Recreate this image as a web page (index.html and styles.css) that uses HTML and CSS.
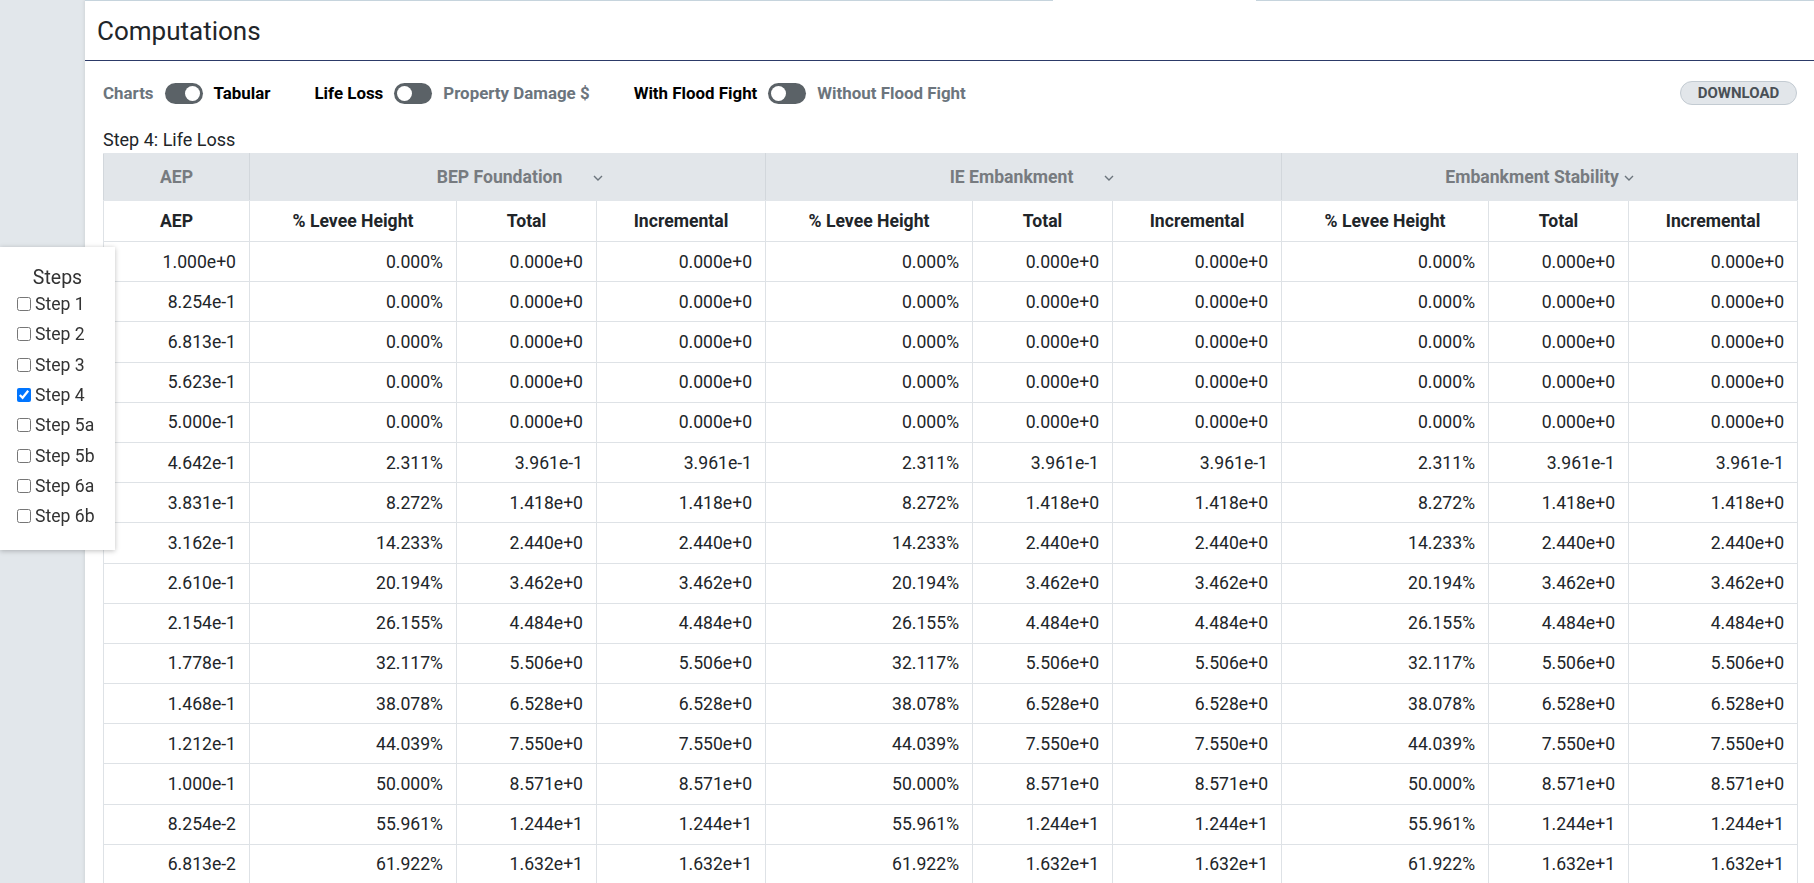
FILE: index.html
```html
<!DOCTYPE html>
<html lang="en">
<head>
<meta charset="utf-8">
<title>Computations</title>
<link rel="stylesheet" href="styles.css">
</head>
<body>
<div class="app">
  <aside class="sidebar"></aside>
  <main class="main">
    <div class="tabline"><span class="tabline-seg tabline-seg--left"></span><span class="tabline-gap"></span><span class="tabline-seg tabline-seg--right"></span></div>
    <header class="header"><h1 class="title">Computations</h1></header>
    <div class="toolbar">
      <div class="toggle-group">
        <span class="tlabel tlabel--off">Charts</span>
        <span class="switch switch--on"><span class="knob"></span></span>
        <span class="tlabel tlabel--on">Tabular</span>
      </div>
      <div class="toggle-group">
        <span class="tlabel tlabel--on">Life Loss</span>
        <span class="switch"><span class="knob"></span></span>
        <span class="tlabel tlabel--off">Property Damage $</span>
      </div>
      <div class="toggle-group">
        <span class="tlabel tlabel--on">With Flood Fight</span>
        <span class="switch"><span class="knob"></span></span>
        <span class="tlabel tlabel--off">Without Flood Fight</span>
      </div>
      <button class="download">DOWNLOAD</button>
    </div>
    <div class="step-label">Step 4: Life Loss</div>
    <table class="grid">
      <colgroup>
        <col class="c-aep">
        <col class="c-lev"><col class="c-tot"><col class="c-inc">
        <col class="c-lev"><col class="c-tot"><col class="c-inc">
        <col class="c-lev"><col class="c-tot"><col class="c-inc">
      </colgroup>
      <thead>
        <tr class="row-groups">
          <th>AEP</th>
          <th colspan="3" class="group group--bep"><span class="group-in"><span>BEP Foundation</span><svg class="chev chev--wide" width="10" height="6" viewBox="0 0 10 6"><polyline points="1,1 5,5 9,1" fill="none" stroke="#6c757d" stroke-width="1.4"/></svg></span></th>
          <th colspan="3" class="group group--ie"><span class="group-in"><span>IE Embankment</span><svg class="chev chev--wide" width="10" height="6" viewBox="0 0 10 6"><polyline points="1,1 5,5 9,1" fill="none" stroke="#6c757d" stroke-width="1.4"/></svg></span></th>
          <th colspan="3" class="group"><span class="group-in"><span>Embankment Stability</span><svg class="chev" width="10" height="6" viewBox="0 0 10 6"><polyline points="1,1 5,5 9,1" fill="none" stroke="#6c757d" stroke-width="1.4"/></svg></span></th>
        </tr>
        <tr class="row-cols">
          <th>AEP</th>
          <th>% Levee Height</th><th>Total</th><th>Incremental</th>
          <th>% Levee Height</th><th>Total</th><th>Incremental</th>
          <th>% Levee Height</th><th>Total</th><th>Incremental</th>
        </tr>
      </thead>
      <tbody>
        <tr><td>1.000e+0</td><td>0.000%</td><td>0.000e+0</td><td>0.000e+0</td><td>0.000%</td><td>0.000e+0</td><td>0.000e+0</td><td>0.000%</td><td>0.000e+0</td><td>0.000e+0</td></tr>
        <tr><td>8.254e-1</td><td>0.000%</td><td>0.000e+0</td><td>0.000e+0</td><td>0.000%</td><td>0.000e+0</td><td>0.000e+0</td><td>0.000%</td><td>0.000e+0</td><td>0.000e+0</td></tr>
        <tr><td>6.813e-1</td><td>0.000%</td><td>0.000e+0</td><td>0.000e+0</td><td>0.000%</td><td>0.000e+0</td><td>0.000e+0</td><td>0.000%</td><td>0.000e+0</td><td>0.000e+0</td></tr>
        <tr><td>5.623e-1</td><td>0.000%</td><td>0.000e+0</td><td>0.000e+0</td><td>0.000%</td><td>0.000e+0</td><td>0.000e+0</td><td>0.000%</td><td>0.000e+0</td><td>0.000e+0</td></tr>
        <tr><td>5.000e-1</td><td>0.000%</td><td>0.000e+0</td><td>0.000e+0</td><td>0.000%</td><td>0.000e+0</td><td>0.000e+0</td><td>0.000%</td><td>0.000e+0</td><td>0.000e+0</td></tr>
        <tr><td>4.642e-1</td><td>2.311%</td><td>3.961e-1</td><td>3.961e-1</td><td>2.311%</td><td>3.961e-1</td><td>3.961e-1</td><td>2.311%</td><td>3.961e-1</td><td>3.961e-1</td></tr>
        <tr><td>3.831e-1</td><td>8.272%</td><td>1.418e+0</td><td>1.418e+0</td><td>8.272%</td><td>1.418e+0</td><td>1.418e+0</td><td>8.272%</td><td>1.418e+0</td><td>1.418e+0</td></tr>
        <tr><td>3.162e-1</td><td>14.233%</td><td>2.440e+0</td><td>2.440e+0</td><td>14.233%</td><td>2.440e+0</td><td>2.440e+0</td><td>14.233%</td><td>2.440e+0</td><td>2.440e+0</td></tr>
        <tr><td>2.610e-1</td><td>20.194%</td><td>3.462e+0</td><td>3.462e+0</td><td>20.194%</td><td>3.462e+0</td><td>3.462e+0</td><td>20.194%</td><td>3.462e+0</td><td>3.462e+0</td></tr>
        <tr><td>2.154e-1</td><td>26.155%</td><td>4.484e+0</td><td>4.484e+0</td><td>26.155%</td><td>4.484e+0</td><td>4.484e+0</td><td>26.155%</td><td>4.484e+0</td><td>4.484e+0</td></tr>
        <tr><td>1.778e-1</td><td>32.117%</td><td>5.506e+0</td><td>5.506e+0</td><td>32.117%</td><td>5.506e+0</td><td>5.506e+0</td><td>32.117%</td><td>5.506e+0</td><td>5.506e+0</td></tr>
        <tr><td>1.468e-1</td><td>38.078%</td><td>6.528e+0</td><td>6.528e+0</td><td>38.078%</td><td>6.528e+0</td><td>6.528e+0</td><td>38.078%</td><td>6.528e+0</td><td>6.528e+0</td></tr>
        <tr><td>1.212e-1</td><td>44.039%</td><td>7.550e+0</td><td>7.550e+0</td><td>44.039%</td><td>7.550e+0</td><td>7.550e+0</td><td>44.039%</td><td>7.550e+0</td><td>7.550e+0</td></tr>
        <tr><td>1.000e-1</td><td>50.000%</td><td>8.571e+0</td><td>8.571e+0</td><td>50.000%</td><td>8.571e+0</td><td>8.571e+0</td><td>50.000%</td><td>8.571e+0</td><td>8.571e+0</td></tr>
        <tr><td>8.254e-2</td><td>55.961%</td><td>1.244e+1</td><td>1.244e+1</td><td>55.961%</td><td>1.244e+1</td><td>1.244e+1</td><td>55.961%</td><td>1.244e+1</td><td>1.244e+1</td></tr>
        <tr><td>6.813e-2</td><td>61.922%</td><td>1.632e+1</td><td>1.632e+1</td><td>61.922%</td><td>1.632e+1</td><td>1.632e+1</td><td>61.922%</td><td>1.632e+1</td><td>1.632e+1</td></tr>
      </tbody>
    </table>
  </main>
</div>
<div class="steps-panel">
  <div class="steps-title">Steps</div>
  <label class="step-item"><input type="checkbox">Step 1</label>
  <label class="step-item"><input type="checkbox">Step 2</label>
  <label class="step-item"><input type="checkbox">Step 3</label>
  <label class="step-item"><input type="checkbox" checked>Step 4</label>
  <label class="step-item"><input type="checkbox">Step 5a</label>
  <label class="step-item"><input type="checkbox">Step 5b</label>
  <label class="step-item"><input type="checkbox">Step 6a</label>
  <label class="step-item"><input type="checkbox">Step 6b</label>
</div>
</body>
</html>
```
FILE: styles.css
```css
* { box-sizing: border-box; }

body {
  margin: 0;
  font-family: Roboto, "Liberation Sans", Arial, sans-serif;
  color: #212529;
  background: #fff;
}

.app {
  display: flex;
  min-height: 100vh;
}

.sidebar {
  width: 85px;
  flex-shrink: 0;
  background: #e2e7eb;
}

.main {
  flex: 1;
  min-width: 0;
  background: #fff;
  box-shadow: -1px 0 3px rgba(0, 0, 0, 0.08);
}

.tabline {
  display: flex;
  height: 1px;
}
.tabline-seg { display: block; height: 1px; background: #c6d4dd; }
.tabline-seg--left { width: 968px; }
.tabline-gap { width: 203px; }
.tabline-seg--right { flex: 1; }

.header {
  height: 60px;
  border-bottom: 1px solid #2c3a68;
  display: flex;
  align-items: center;
  padding-left: 12px;
}

.title {
  margin: 0;
  font-size: 26px;
  font-weight: 400;
  color: #212529;
}

.toolbar {
  display: flex;
  align-items: center;
  padding: 20px 17px 0 18px;
}

.toggle-group {
  display: flex;
  align-items: center;
  gap: 11px;
  margin-right: 44px;
}

.tlabel {
  font-size: 16.9px;
  font-weight: 700;
  line-height: 20px;
}
.tlabel--off { color: #6c757d; }
.tlabel--on { color: #000; }

.switch {
  width: 38px;
  height: 21px;
  border-radius: 11px;
  background: #5b6267;
  display: flex;
  align-items: center;
  padding: 0 3px;
}
.switch--on { justify-content: flex-end; }

.knob {
  width: 15px;
  height: 15px;
  border-radius: 50%;
  background: #fff;
}

.download {
  margin-left: auto;
  height: 24px;
  width: 117px;
  padding: 0;
  border-radius: 12px;
  border: 1px solid #c3cbd2;
  background: #e2e6ea;
  color: #4a5056;
  font-family: inherit;
  font-size: 15px;
  font-weight: 700;
}

.step-label {
  margin: 24px 0 3px 18px;
  font-size: 18px;
  line-height: 21px;
  color: #212529;
}

.grid {
  margin-left: 18px;
  width: 1694px;
  table-layout: fixed;
  border-collapse: collapse;
  font-size: 17.6px;
}

.c-aep { width: 146px; }
.c-lev { width: 207px; }
.c-tot { width: 140px; }
.c-inc { width: 169px; }

.grid th,
.grid td {
  border: 1px solid #dee2e6;
  padding: 0 13px;
}

.row-groups { height: 47px; background: #e2e6ea; }
.row-groups th {
  color: #777b80;
  font-weight: 700;
  text-align: center;
  border-color: #e2e6ea #d2d7dc;
}

.row-groups .group--bep { padding-left: 38px; }
.row-groups .group--ie { padding-left: 30px; }

.group-in {
  display: inline-flex;
  align-items: center;
}

.chev { margin-left: 5px; margin-top: 2px; }
.chev--wide { margin-left: 31px; }

.row-cols { height: 41px; }
.row-cols th {
  font-weight: 700;
  text-align: center;
  color: #212529;
}

.grid tbody tr { height: 40.2px; }
.grid td {
  text-align: right;
  color: #212529;
}

.steps-panel {
  position: fixed;
  left: 0;
  top: 247px;
  width: 115px;
  background: #fff;
  box-shadow: 0 1px 5px rgba(0, 0, 0, 0.25);
  padding: 19px 0;
}

.steps-title {
  text-align: center;
  font-size: 19.5px;
  line-height: 23px;
  color: #333;
}

.step-item {
  display: flex;
  align-items: center;
  height: 30.3px;
  padding-left: 17px;
  font-size: 17.6px;
  color: #333;
}

.step-item input {
  width: 14px;
  height: 14px;
  margin: 0 4px 0 0;
}
```
